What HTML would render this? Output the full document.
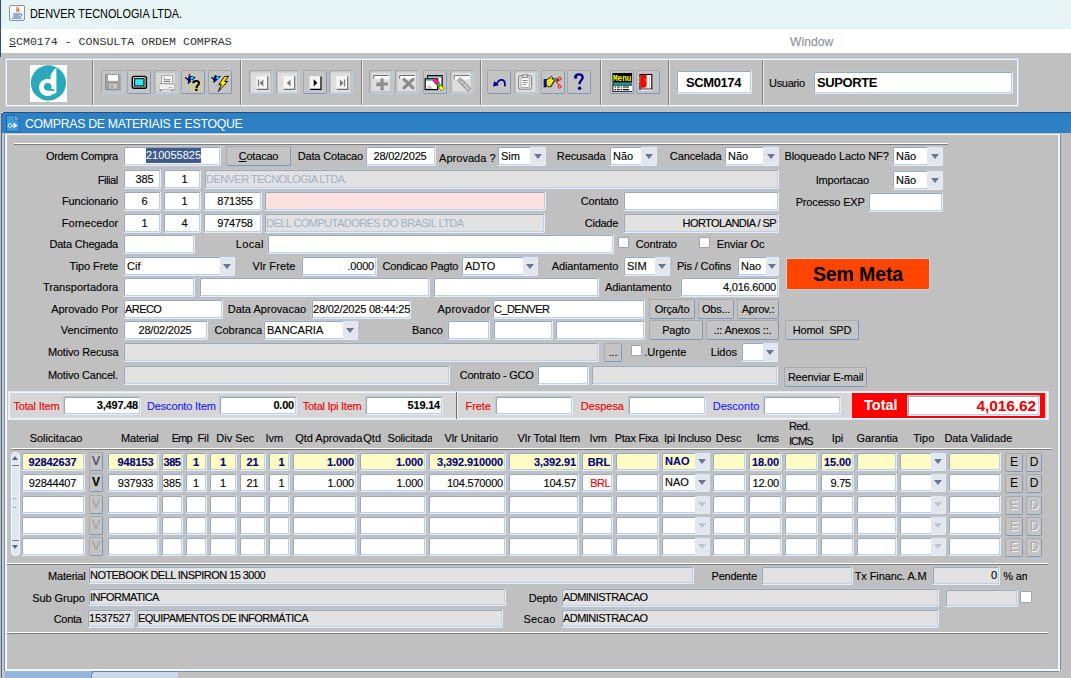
<!DOCTYPE html><html><head><meta charset="utf-8"><style>
*{box-sizing:border-box;margin:0;padding:0}
html,body{width:1071px;height:678px;overflow:hidden;background:#c0c0c0;font-family:"Liberation Sans",sans-serif;font-size:11px;color:#000;-webkit-text-stroke:0.12px currentColor}
body>div,#r div{position:absolute}
div{position:absolute;white-space:nowrap}
.f{background:#fff;border:1px solid;border-color:#b4c8e2 #e4edf8 #e4edf8 #b4c8e2;border-radius:2px;padding:0 2px 0 1px;overflow:hidden;box-shadow:inset 1px 1px 0 #a6a6a6,inset -1px -1px 0 #bcd0ea}
.g{background:#e2e2e2}
.l{line-height:20px;letter-spacing:-0.2px}
.b{background:#c4c4c4;border:1px solid #a9a9a9;border-right-color:#7b98bf;border-bottom-color:#7b98bf;border-radius:2px;text-align:center;letter-spacing:-0.2px}
.ck{background:#fff;border:1px solid #9aa6b4;border-radius:1px}
.ct{position:absolute;left:3px;top:0}
.ca{position:absolute;top:0;background:#e2e6ee}
.ca i{position:absolute;left:50%;margin-left:-4px;width:0;height:0;border-left:4px solid transparent;border-right:4px solid transparent;border-top:5px solid #6b7590}
.yl{background:#fdfcc4}
.nb{color:#000080;font-weight:bold}
.tb{position:absolute;width:24px;height:24px;border:1px solid #aab4c0;border-right-color:#8fa6c4;border-bottom-color:#7e9ac0;border-radius:2px;background:#c4c4c4}
.tb svg{position:absolute;left:3px;top:3px}
.tb{-webkit-text-stroke:0}
.sep{width:2px;background:#808080;border-right:1px solid #f0f0f0}
</style></head><body><div style="left:0;top:0;width:1071px;height:29px;background:#e6f4f5"></div>
<div style="left:0;top:0;width:1px;height:57px;background:#2d4e7e"></div>
<div style="left:0;top:29px;width:1071px;height:24px;background:#fff"></div>
<div style="left:0;top:0;width:1px;height:57px;background:#2d4e7e"></div>
<div style="left:9px;top:5px;width:16px;height:16px;border:1px solid #8294ac;border-radius:2px;background:linear-gradient(#fdfdfe,#e2e8ee)">
<svg width="14" height="14" style="position:absolute;left:0;top:0" viewBox="0 0 14 14"><path d="M7.5 1c-2.2 1.6 1.2 2.6-1 5M9 2.5c-1.2 1 .6 1.8-.6 3" stroke="#e86c12" stroke-width="1.3" fill="none"/><path d="M3 8h7M3.5 10h6M2.5 12h8.5" stroke="#3d6aa8" stroke-width="1.1" fill="none"/><path d="M10 7.5c2.2 0 2.2 2.8 0 3" stroke="#3d6aa8" stroke-width="1" fill="none"/></svg></div>
<div style="left:30px;top:6px;font-size:12.6px;letter-spacing:0px;line-height:17px;color:#000;transform:scaleX(0.865);transform-origin:0 0;-webkit-text-stroke:0">DENVER TECNOLOGIA LTDA.</div>
<div style="left:9px;top:34px;font-family:'Liberation Mono',monospace;font-size:11.6px;line-height:16px;color:#333;-webkit-text-stroke:0"><u style="text-decoration:underline">S</u>CM0174 - CONSULTA ORDEM COMPRAS</div>
<div style="left:790px;top:34px;font-size:12px;line-height:16px;color:#8a9099;letter-spacing:0.1px">Window</div>
<div style="left:5px;top:58px;width:1014px;height:49px;border:1px solid #c4d6ee;box-shadow:inset 0 0 0 1px #f2f6fb"></div>
<div style="left:30px;top:65px;width:37px;height:37px;background:#fff">
<svg width="37" height="37" viewBox="0 0 37 37" style="position:absolute;left:0;top:0"><circle cx="18.4" cy="17.9" r="17.6" fill="#2aa9bd"/>
<circle cx="17.6" cy="22.4" r="8.6" fill="#fff"/>
<polygon points="20.6,10 24.5,4 26.4,2.8 26.4,27.5 24,29 20.6,27" fill="#fff"/>
<circle cx="17.7" cy="21.8" r="3.8" fill="#2aa9bd"/>
<polygon points="17.7,23.5 24.3,24.3 24.3,26.2 17.7,25.6" fill="#2aa9bd"/>
</svg></div>
<div style="left:92px;top:60px;width:1px;height:45px;background:#7f7f7f"></div><div style="left:93px;top:60px;width:1px;height:45px;background:#e8e8e8"></div>
<div style="left:240px;top:60px;width:1px;height:45px;background:#7f7f7f"></div><div style="left:241px;top:60px;width:1px;height:45px;background:#e8e8e8"></div>
<div style="left:361px;top:60px;width:1px;height:45px;background:#7f7f7f"></div><div style="left:362px;top:60px;width:1px;height:45px;background:#e8e8e8"></div>
<div style="left:480px;top:60px;width:1px;height:45px;background:#7f7f7f"></div><div style="left:481px;top:60px;width:1px;height:45px;background:#e8e8e8"></div>
<div style="left:600px;top:60px;width:1px;height:45px;background:#7f7f7f"></div><div style="left:601px;top:60px;width:1px;height:45px;background:#e8e8e8"></div>
<div style="left:668px;top:60px;width:1px;height:45px;background:#7f7f7f"></div><div style="left:669px;top:60px;width:1px;height:45px;background:#e8e8e8"></div>
<div style="left:762px;top:60px;width:1px;height:45px;background:#7f7f7f"></div><div style="left:763px;top:60px;width:1px;height:45px;background:#e8e8e8"></div>
<div class="tb" style="left:101px;top:70px;border-color:#a6a6a6 #b9cfe8 #b9cfe8 #a6a6a6"><svg width="24" height="24" viewBox="0 0 24 24" style="left:-1px;top:-1px"><path d="M4.5 4h13.5l1.7 1.7v14H4.5z" fill="#a0a0a0"/><path d="M4.5 4v15.7h15.2" stroke="#8a8a8a" stroke-width="0.8" fill="none"/><rect x="7" y="4.8" width="10" height="6" fill="#fff"/><rect x="8.2" y="13.9" width="7.8" height="5" fill="#c6c6c6"/><rect x="10.3" y="15.3" width="1.6" height="3.2" fill="#9a9a9a"/><path d="M7 4.3h10M8 19.5h8" stroke="#7a7a7a" stroke-width="0.8" stroke-dasharray="1 1"/></svg></div>
<div class="tb" style="left:127px;top:70px;border-color:#a6a6a6 #7d99c0 #7d99c0 #a6a6a6"><svg width="24" height="24" viewBox="0 0 24 24" style="left:-1px;top:-1px"><rect x="5.3" y="6.4" width="14.1" height="11.9" rx="1.8" fill="#c8c8c8" stroke="#000" stroke-width="1.4"/><rect x="7.2" y="8.2" width="10.3" height="8.3" fill="#000"/><rect x="8.2" y="9.2" width="8.3" height="6.3" fill="#10e4f0"/><path d="M8.5 10.3h8M8.5 12.3h8M8.5 14.3h8" stroke="#bfeef2" stroke-width="0.8" stroke-dasharray="1 1"/></svg></div>
<div class="tb" style="left:154px;top:70px;border-color:#a6a6a6 #b9cfe8 #b9cfe8 #a6a6a6"><svg width="24" height="24" viewBox="0 0 24 24" style="left:-1px;top:-1px"><rect x="2.5" y="3" width="18.5" height="19" fill="#dadada"/><rect x="7.5" y="5.8" width="11" height="7.5" fill="#fff" stroke="#8a8a8a" stroke-width="0.7"/><path d="M9.5 7.8h1.5M9.5 9.8h7M9.5 11.6h7" stroke="#555" stroke-width="0.8"/><path d="M7 12.5v1.5" stroke="#777" stroke-width="0.8"/><rect x="5" y="14" width="15.7" height="5.6" fill="#f0f0f0" stroke="#a8a8a8" stroke-width="0.7"/><path d="M5.5 20.5h2M17.5 20.5h2" stroke="#6a6a6a" stroke-width="1.1"/><path d="M15 17.5h3.5" stroke="#8a8a8a" stroke-width="0.9" stroke-dasharray="1 0.6"/></svg></div>
<div class="tb" style="left:181px;top:70px;border-color:#a6a6a6 #7d99c0 #7d99c0 #a6a6a6"><svg width="24" height="24" viewBox="0 0 24 24" style="left:-1px;top:-1px"><path d="M4.2 7.2l3 2.8" stroke="#000" stroke-width="1.2"/><circle cx="8.4" cy="4.4" r="0.9" fill="#f00"/><path d="M8.2 5.4l1.5 1" stroke="#000" stroke-width="0.9"/><polygon points="8,6.2 14.2,7.4 7.2,13.6" fill="#0010f0" stroke="#000" stroke-width="0.9"/><polygon points="9.2,6.8 13.4,7.6 10.6,10" fill="#00f0f8"/><rect x="10" y="10" width="1" height="1" fill="#ffee00"/><rect x="10" y="12" width="1" height="1" fill="#ffee00"/><rect x="10" y="14" width="1" height="1" fill="#ffee00"/><rect x="10" y="16" width="1" height="1" fill="#ffee00"/><rect x="10" y="18" width="1" height="1" fill="#ffee00"/><rect x="10" y="20" width="1" height="1" fill="#ffee00"/><rect x="12" y="10" width="1" height="1" fill="#ffee00"/><rect x="12" y="12" width="1" height="1" fill="#ffee00"/><rect x="12" y="14" width="1" height="1" fill="#ffee00"/><rect x="12" y="16" width="1" height="1" fill="#ffee00"/><rect x="12" y="18" width="1" height="1" fill="#ffee00"/><rect x="12" y="20" width="1" height="1" fill="#ffee00"/><rect x="14" y="10" width="1" height="1" fill="#ffee00"/><rect x="14" y="12" width="1" height="1" fill="#ffee00"/><rect x="14" y="14" width="1" height="1" fill="#ffee00"/><rect x="14" y="16" width="1" height="1" fill="#ffee00"/><rect x="14" y="18" width="1" height="1" fill="#ffee00"/><rect x="14" y="20" width="1" height="1" fill="#ffee00"/><rect x="16" y="10" width="1" height="1" fill="#ffee00"/><rect x="16" y="12" width="1" height="1" fill="#ffee00"/><rect x="16" y="14" width="1" height="1" fill="#ffee00"/><rect x="16" y="16" width="1" height="1" fill="#ffee00"/><rect x="16" y="18" width="1" height="1" fill="#ffee00"/><rect x="16" y="20" width="1" height="1" fill="#ffee00"/><rect x="18" y="10" width="1" height="1" fill="#ffee00"/><rect x="18" y="12" width="1" height="1" fill="#ffee00"/><rect x="18" y="14" width="1" height="1" fill="#ffee00"/><rect x="18" y="16" width="1" height="1" fill="#ffee00"/><rect x="18" y="18" width="1" height="1" fill="#ffee00"/><rect x="18" y="20" width="1" height="1" fill="#ffee00"/><rect x="20" y="10" width="1" height="1" fill="#ffee00"/><rect x="20" y="12" width="1" height="1" fill="#ffee00"/><rect x="20" y="14" width="1" height="1" fill="#ffee00"/><rect x="20" y="16" width="1" height="1" fill="#ffee00"/><rect x="20" y="18" width="1" height="1" fill="#ffee00"/><rect x="20" y="20" width="1" height="1" fill="#ffee00"/><path d="M12.3 13.3c0-1.6 1.2-2.3 2.8-2.3 1.8 0 2.9 1 2.9 2.3 0 1.9-2.4 2.1-2.4 4.1v0.6" stroke="#000" stroke-width="2" fill="none"/><rect x="14" y="18.8" width="2.6" height="2" fill="#000"/></svg></div>
<div class="tb" style="left:207.5px;top:70px;border-color:#a6a6a6 #7d99c0 #7d99c0 #a6a6a6"><svg width="24" height="24" viewBox="0 0 24 24" style="left:-1px;top:-1px"><path d="M3.5 7.2l2.8 2.6" stroke="#000" stroke-width="1.2"/><path d="M7.2 5.4l1.5 1" stroke="#000" stroke-width="0.9"/><polygon points="6.6,6.1 12.4,6.6 5.8,12.5" fill="#0010f0" stroke="#000" stroke-width="0.9"/><polygon points="7.8,6.6 12,6.8 9.2,9.4" fill="#00f0f8"/><polygon points="16.5,6.5 20.5,6.2 16.6,11.6 19.6,11.3 10.3,21.6 13.4,14.3 10.8,14.5" fill="#ffee00" stroke="#000" stroke-width="0.9" stroke-linejoin="round"/><path d="M10.8 14.5l-1.5 1.8" stroke="#888" stroke-width="0.8"/></svg></div>
<div class="tb" style="left:249px;top:70px;border-color:#a6a6a6 #b9cfe8 #b9cfe8 #a6a6a6"><svg width="24" height="24" viewBox="0 0 24 24" style="left:-1px;top:-1px"><rect x="2" y="2.5" width="19" height="20" fill="#dedede"/><rect x="7.3" y="6.2" width="11" height="12.8" fill="#f6f6f6"/><path d="M18.7 6.6v12.8H7.8" stroke="#707070" stroke-width="1.2" fill="none"/><rect x="8.9" y="9.5" width="1.2" height="7" fill="#7a7a7a"/><polygon points="14.3,9.5 10.5,13 14.3,16.5" fill="#7a7a7a"/></svg></div>
<div class="tb" style="left:275.5px;top:70px;border-color:#a6a6a6 #b9cfe8 #b9cfe8 #a6a6a6"><svg width="24" height="24" viewBox="0 0 24 24" style="left:-1px;top:-1px"><rect x="2" y="2.5" width="19" height="20" fill="#dedede"/><rect x="7.3" y="6.2" width="11" height="12.8" fill="#f6f6f6"/><path d="M18.7 6.6v12.8H7.8" stroke="#707070" stroke-width="1.2" fill="none"/><polygon points="14.5,9.5 10.9,13 14.5,16.5" fill="#7a7a7a"/></svg></div>
<div class="tb" style="left:302.5px;top:70px;border-color:#a6a6a6 #7d99c0 #7d99c0 #a6a6a6"><svg width="24" height="24" viewBox="0 0 24 24" style="left:-1px;top:-1px"><rect x="6.6" y="6.2" width="11" height="12.8" fill="#f6f6f6"/><path d="M18.0 6.6v12.8H7.1" stroke="#000" stroke-width="1.2" fill="none"/><polygon points="10.7,9.2 14.3,12.8 10.7,16.4" fill="#000"/></svg></div>
<div class="tb" style="left:329px;top:70px;border-color:#a6a6a6 #b9cfe8 #b9cfe8 #a6a6a6"><svg width="24" height="24" viewBox="0 0 24 24" style="left:-1px;top:-1px"><rect x="2" y="2.5" width="19" height="20" fill="#dedede"/><rect x="7.3" y="6.2" width="11" height="12.8" fill="#f6f6f6"/><path d="M18.7 6.6v12.8H7.8" stroke="#707070" stroke-width="1.2" fill="none"/><polygon points="10.9,9.5 14.5,13 10.9,16.5" fill="#7a7a7a"/><rect x="14.899999999999999" y="9.5" width="1.2" height="7" fill="#7a7a7a"/></svg></div>
<div class="tb" style="left:369px;top:70px;border-color:#a6a6a6 #b9cfe8 #b9cfe8 #a6a6a6"><svg width="24" height="24" viewBox="0 0 24 24" style="left:-1px;top:-1px"><rect x="2.5" y="2.5" width="18.5" height="18.5" fill="#dedede"/><rect x="4.3" y="5.1" width="15.4" height="4" fill="#fff"/><path d="M4.7 9V5.5h15" stroke="#6e6e6e" stroke-width="1" fill="none"/><path d="M13.1 8.3v11.4M7.3 14.1h11.6" stroke="#8e8e8e" stroke-width="3"/><path d="M11.6 19.7h3M7.3 15.6h4.3" stroke="#6e6e6e" stroke-width="0.9"/></svg></div>
<div class="tb" style="left:395px;top:70px;border-color:#a6a6a6 #b9cfe8 #b9cfe8 #a6a6a6"><svg width="24" height="24" viewBox="0 0 24 24" style="left:-1px;top:-1px"><rect x="2.5" y="2.5" width="18.5" height="18.5" fill="#dedede"/><rect x="4.3" y="5.1" width="15.4" height="4" fill="#fff"/><path d="M4.7 9V5.5h15" stroke="#6e6e6e" stroke-width="1" fill="none"/><path d="M9 9.3l9 8.6M18 9.3l-9 8.6" stroke="#8a8a8a" stroke-width="3" stroke-linecap="round"/></svg></div>
<div class="tb" style="left:422.5px;top:70px;border-color:#a6a6a6 #7d99c0 #7d99c0 #a6a6a6"><svg width="24" height="24" viewBox="0 0 24 24" style="left:-1px;top:-1px"><rect x="4.7" y="5.6" width="14.4" height="11" fill="#fff" stroke="#000" stroke-width="1.2"/><path d="M6 6.9h12" stroke="#108c8c" stroke-width="1.1"/><rect x="2.2" y="8.8" width="12.4" height="10.8" fill="#fff" stroke="#000" stroke-width="1.2"/><path d="M3.3 10h10" stroke="#108c8c" stroke-width="1.1"/><path d="M3 19l3.5-4.5 3.5 4.5z" fill="#c8c8c8"/><polygon points="9.8,10.4 12.4,8.2 16.4,12.8 13.6,15" fill="#ff10d0" stroke="#f00" stroke-width="0.8"/><polygon points="13.6,15 16.4,12.8 18.2,15 15.6,17.2" fill="#00e000"/><polygon points="15.6,17.2 18.2,15 21,18.6 18.6,21" fill="#ffff00" stroke="#000" stroke-width="0.4"/></svg></div>
<div class="tb" style="left:449.5px;top:70px;border-color:#a6a6a6 #b9cfe8 #b9cfe8 #a6a6a6"><svg width="24" height="24" viewBox="0 0 24 24" style="left:-1px;top:-1px"><rect x="2.5" y="2.5" width="18.5" height="19" fill="#dedede"/><rect x="3.8" y="5.2" width="15.4" height="4.2" fill="#fff"/><path d="M4.2 9.4V5.6h15" stroke="#6e6e6e" stroke-width="1" fill="none"/><polygon points="7.5,10.5 10.3,7.7 20.8,18.7 18,21.3" fill="#c4c4c4" stroke="#7a7a7a" stroke-width="0.9"/><path d="M9.5 12.5l2.8-2.8M12 15l2.8-2.8" stroke="#8a8a8a" stroke-width="0.8"/></svg></div>
<div class="tb" style="left:487px;top:70px;border-color:#a6a6a6 #7d99c0 #7d99c0 #a6a6a6"><svg width="24" height="24" viewBox="0 0 24 24" style="left:-1px;top:-1px"><path d="M9.5 14.5c1.3-3.3 3.4-5 5.6-4.6 2.2.5 3.3 2.6 2.6 6.4" stroke="#000090" stroke-width="1.7" fill="none"/><polygon points="6,16.6 7.2,11 11.8,15.2" fill="#000090"/></svg></div>
<div class="tb" style="left:514px;top:70px;border-color:#a6a6a6 #b9cfe8 #b9cfe8 #a6a6a6"><svg width="24" height="24" viewBox="0 0 24 24" style="left:-1px;top:-1px"><rect x="2" y="2.5" width="19.5" height="19.5" fill="#dedede"/><rect x="4.6" y="5.6" width="13" height="13.6" rx="1.3" fill="#e8e8e8" stroke="#7e7e7e" stroke-width="1"/><rect x="7" y="7.8" width="8.2" height="9.8" fill="#fff" stroke="#8a8a8a" stroke-width="0.7"/><path d="M8.5 4.8h5v2.5h-5z" fill="#e8e8e8" stroke="#7e7e7e" stroke-width="0.9"/><path d="M8.6 10.5h5M8.6 12.6h5M8.6 14.7h3.5" stroke="#7e7e7e" stroke-width="0.9"/></svg></div>
<div class="tb" style="left:541px;top:70px;border-color:#a6a6a6 #7d99c0 #7d99c0 #a6a6a6"><svg width="24" height="24" viewBox="0 0 24 24" style="left:-1px;top:-1px"><rect x="3" y="9.3" width="2.2" height="7.7" fill="#0010f0" stroke="#000" stroke-width="0.6"/><path d="M5.2 9.8l2.6-1.2 2.8-2.2 1 1.2-0.8 1.4h6.2v1.9h-4.2v1.5h-0.9v1.5h-0.9v1.5h-0.9v1.3h-2.5l-2.4-1.2z" fill="#f2ea30" stroke="#000" stroke-width="0.9"/><path d="M7 11.5h3.5M7 13.3h3M7 15h2.5" stroke="#c8b000" stroke-width="0.7" stroke-dasharray="0.8 0.8"/><circle cx="18.6" cy="8.6" r="1.5" fill="none" stroke="#f00" stroke-width="1"/><circle cx="18.6" cy="16.6" r="1.5" fill="none" stroke="#f00" stroke-width="1"/><path d="M18 10l-2 2.6 2 2.6" stroke="#f00" stroke-width="1" fill="none"/></svg></div>
<div class="tb" style="left:567px;top:70px;border-color:#a6a6a6 #7d99c0 #7d99c0 #a6a6a6"><svg width="24" height="24" viewBox="0 0 24 24" style="left:-1px;top:-1px"><path d="M8.3 7.6c0-2.1 1.6-3.2 3.6-3.2 2.3 0 3.8 1.3 3.8 3.1 0 2.6-3.1 2.9-3.1 5.8v1" stroke="#000090" stroke-width="2.3" fill="none"/><circle cx="8.6" cy="7.2" r="1.6" fill="#000090"/><circle cx="12.6" cy="18.3" r="1.7" fill="#000090"/></svg></div>
<div class="tb" style="left:609.5px;top:70px;border-color:#a6a6a6 #7d99c0 #7d99c0 #a6a6a6"><svg width="24" height="24" viewBox="0 0 24 24" style="left:-1px;top:-1px"><rect x="2.5" y="3" width="19.5" height="9" fill="#000"/><text x="3" y="10.8" font-family="Liberation Mono" font-weight="bold" font-size="9" fill="#ffff00" textLength="18.5" lengthAdjust="spacingAndGlyphs">Menu</text><rect x="2.5" y="12.4" width="19.5" height="9.6" fill="#000"/><rect x="3.4" y="13.3" width="18.6" height="1.3" fill="#00e8f0"/><rect x="3.4" y="15.6" width="18.6" height="5.6" fill="#fff"/><path d="M4.6 17h1.4M7 17h2.6M10.7 17h1.4M13 17h6M4.6 19.6h1.4M7 19.6h2.6M10.7 19.6h1.4M13 19.6h6" stroke="#000" stroke-width="1.2"/></svg></div>
<div class="tb" style="left:635.5px;top:70px;border-color:#a6a6a6 #7d99c0 #7d99c0 #a6a6a6"><svg width="24" height="24" viewBox="0 0 24 24" style="left:-1px;top:-1px"><rect x="4" y="4.5" width="11.8" height="14.6" fill="#fff" stroke="#000" stroke-width="1.1"/><polygon points="4.5,5 10.6,5 10.6,16.2 9.3,17.4 4.5,17.9" fill="#ff0000"/><path d="M13.4 5.5v11.7h-3.4" stroke="#c8c8c8" stroke-width="1" fill="none"/><circle cx="9.2" cy="9.8" r="0.6" fill="#ff0"/><path d="M2.5 8.4h1.4M2.5 11.5h1.4" stroke="#ff0" stroke-width="0.8"/><path d="M4.5 20h11.5" stroke="#fff" stroke-width="1"/></svg></div>
<div class="f" style="left:676px;top:70px;width:76px;height:24px;font-weight:bold;font-size:13px;line-height:24px;text-align:center;letter-spacing:-0.4px;-webkit-text-stroke:0">SCM0174</div>
<div style="left:769px;top:75px;font-size:11px;line-height:16px;letter-spacing:-0.3px">Usuario</div>
<div class="f" style="left:813px;top:71px;width:200px;height:23px;font-weight:bold;font-size:13px;line-height:22px;letter-spacing:-0.4px;padding-left:3px;-webkit-text-stroke:0">SUPORTE</div>
<div style="left:2px;top:112px;width:1069px;height:21px;background:#2c80c3;border-top:1px solid #24508a"></div>
<div style="left:25px;top:114px;font-size:12.3px;letter-spacing:-0.3px;line-height:18px;color:#fff;top:115px;-webkit-text-stroke:0">COMPRAS DE MATERIAIS E ESTOQUE</div>
<svg width="14" height="17" viewBox="0 0 14 17" style="position:absolute;left:6px;top:115px"><path d="M0.5 0.5h8l4.5 4.5v11.5h-12.5z" fill="#3f98d8" stroke="#2468a8" stroke-width="1"/><path d="M8.5 0.5v4.5h4.5" fill="#7cc0ec" stroke="#2468a8" stroke-width="0.8"/><circle cx="4" cy="10.5" r="1.9" fill="none" stroke="#fff" stroke-width="1.4" stroke-dasharray="1.2 0.8"/><path d="M7.5 7.5l4 3-4 3z" fill="#fff"/></svg>
<div style="left:1px;top:113px;width:1px;height:565px;background:#4a6896"></div>
<div style="left:2px;top:133px;width:2px;height:545px;background:#ccc8c4"></div>
<div style="left:1px;top:112px;width:2px;height:1px;background:#f4f4f4"></div>
<div style="left:4px;top:134px;width:1px;height:537px;background:#6e90b4"></div>
<div style="left:5px;top:134px;width:1055px;height:537px;border-top:1px solid #f6f9fc;border-left:2px solid #f6f9fc;border-right:1px solid #fafcff;border-bottom:2px solid #f6f9fc"></div>
<div style="left:1060px;top:134px;width:1px;height:536px;background:#6d8cb2"></div>
<div style="left:1058px;top:135px;width:2px;height:535px;background:#f2f6fb"></div>
<div style="left:5px;top:671px;width:1054px;height:1px;background:#6d8cb2"></div>
<div style="left:5px;top:671px;width:86px;height:7px;background:#93b6da"></div>
<div style="left:91px;top:671px;width:87px;height:7px;background:#cbd9ea;border-left:1px solid #6a84a8;border-top:1px solid #6a84a8;border-top-left-radius:4px"></div>
<div style="left:14px;top:143px;width:934px;height:1px;background:#fff"></div><div style="left:14px;top:144px;width:934px;height:1px;background:#7c7c7c"></div>
<div style="left:11px;top:448px;width:1041px;height:1px;background:#fff"></div><div style="left:11px;top:449px;width:1041px;height:1px;background:#7c7c7c"></div>
<div style="left:7px;top:563px;width:1041px;height:1px;background:#fff"></div><div style="left:7px;top:564px;width:1041px;height:1px;background:#7c7c7c"></div>
<div style="left:7px;top:632px;width:1041px;height:1px;background:#fff"></div><div style="left:7px;top:633px;width:1041px;height:1px;background:#7c7c7c"></div>
<div class="l" style="left:45.9px;top:146px;letter-spacing:-0.32px;">Ordem Compra</div>
<div class="f" style="left:123px;top:146px;width:98px;height:20px;line-height:18px;padding:0"><span style="position:absolute;left:22px;top:1px;height:15px;line-height:15px;background:#3d5b8c;color:#fff;padding:0 0 0 0;letter-spacing:0px;-webkit-text-stroke:0">210055825</span></div>
<div class="b" style="left:226px;top:146px;width:65px;height:20px;line-height:18px;"><u>C</u>otacao</div>
<div class="l" style="left:297.8px;top:146px;letter-spacing:-0.18px;">Data Cotacao</div>
<div class="f" style="left:365px;top:146px;width:71px;height:20px;text-align:center;line-height:18px;letter-spacing:-0.2px;">28/02/2025</div>
<div class="l" style="left:439.1px;top:148px;letter-spacing:0.02px;">Aprovada ?</div>
<div class="f" style="left:497px;top:146px;width:49px;height:20px;line-height:18px;"><span class="ct">Sim</span><div class="ca" style="left:32px;width:15px;height:18px"><i style="top:7px;border-top-color:#6b7590"></i></div></div>
<div class="l" style="left:556.8px;top:146px;letter-spacing:-0.09px;">Recusada</div>
<div class="f" style="left:609px;top:146px;width:48px;height:20px;line-height:18px;"><span class="ct">Não</span><div class="ca" style="left:31px;width:15px;height:18px"><i style="top:7px;border-top-color:#6b7590"></i></div></div>
<div class="l" style="left:669.8px;top:146px;letter-spacing:-0.11px;">Cancelada</div>
<div class="f" style="left:724px;top:146px;width:55px;height:20px;line-height:18px;"><span class="ct">Não</span><div class="ca" style="left:38px;width:15px;height:18px"><i style="top:7px;border-top-color:#6b7590"></i></div></div>
<div class="l" style="left:784.5px;top:146px;letter-spacing:-0.12px;">Bloqueado Lacto NF?</div>
<div class="f" style="left:892px;top:146px;width:51px;height:20px;line-height:18px;"><span class="ct">Não</span><div class="ca" style="left:34px;width:15px;height:18px"><i style="top:7px;border-top-color:#6b7590"></i></div></div>
<div class="l" style="left:97.8px;top:170px;letter-spacing:-0.44px;">Filial</div>
<div class="f" style="left:123px;top:169px;width:38px;height:20px;text-align:center;line-height:18px;padding-left:5px;padding-right:0;letter-spacing:-0.2px;">385</div>
<div class="f" style="left:163px;top:169px;width:38px;height:20px;text-align:center;line-height:18px;padding-left:5px;padding-right:0;letter-spacing:-0.2px;">1</div>
<div class="f g" style="left:204px;top:169px;width:575px;height:20px;text-align:left;line-height:18px;letter-spacing:-0.55px;"><span style="color:#9fb3cc;-webkit-text-stroke:0">DENVER TECNOLOGIA LTDA.</span></div>
<div class="l" style="left:815.7px;top:170px;letter-spacing:-0.19px;">Importacao</div>
<div class="f" style="left:892px;top:170px;width:51px;height:20px;line-height:18px;"><span class="ct">Não</span><div class="ca" style="left:34px;width:15px;height:18px"><i style="top:7px;border-top-color:#6b7590"></i></div></div>
<div class="l" style="left:62.0px;top:191px;letter-spacing:-0.13px;">Funcionario</div>
<div class="f" style="left:123px;top:191px;width:38px;height:20px;text-align:center;line-height:18px;padding-left:5px;padding-right:0;letter-spacing:-0.2px;">6</div>
<div class="f" style="left:163px;top:191px;width:38px;height:20px;text-align:center;line-height:18px;padding-left:5px;padding-right:0;letter-spacing:-0.2px;">1</div>
<div class="f" style="left:203px;top:191px;width:59px;height:20px;text-align:center;line-height:18px;padding-left:5px;padding-right:0;letter-spacing:-0.2px;">871355</div>
<div class="f g" style="left:264px;top:191px;width:282px;height:20px;text-align:left;line-height:18px;letter-spacing:-0.2px;background:#fde0e0"></div>
<div class="l" style="left:580.7px;top:191px;letter-spacing:-0.15px;">Contato</div>
<div class="f" style="left:623px;top:191px;width:156px;height:20px;text-align:left;line-height:18px;letter-spacing:-0.2px;"></div>
<div class="l" style="left:795.7px;top:192px;letter-spacing:-0.16px;">Processo EXP</div>
<div class="f" style="left:868px;top:192px;width:75px;height:20px;text-align:left;line-height:18px;letter-spacing:-0.2px;"></div>
<div class="l" style="left:61.8px;top:213px;letter-spacing:0.02px;">Fornecedor</div>
<div class="f" style="left:123px;top:213px;width:38px;height:20px;text-align:center;line-height:18px;padding-left:5px;padding-right:0;letter-spacing:-0.2px;">1</div>
<div class="f" style="left:163px;top:213px;width:38px;height:20px;text-align:center;line-height:18px;padding-left:5px;padding-right:0;letter-spacing:-0.2px;">4</div>
<div class="f" style="left:203px;top:213px;width:59px;height:20px;text-align:center;line-height:18px;padding-left:5px;padding-right:0;letter-spacing:-0.2px;">974758</div>
<div class="f g" style="left:264px;top:213px;width:281px;height:20px;text-align:left;line-height:18px;letter-spacing:-0.55px;"><span style="color:#9fb3cc;-webkit-text-stroke:0">DELL COMPUTADORES DO BRASIL LTDA</span></div>
<div class="l" style="left:584.8px;top:213px;letter-spacing:-0.27px;">Cidade</div>
<div class="f g" style="left:623px;top:213px;width:156px;height:20px;text-align:right;line-height:18px;letter-spacing:-0.55px;">HORTOLANDIA / SP</div>
<div class="l" style="left:49.4px;top:234px;letter-spacing:-0.19px;">Data Chegada</div>
<div class="f" style="left:123px;top:234px;width:72px;height:20px;text-align:left;line-height:18px;letter-spacing:-0.2px;"></div>
<div class="l" style="left:235.7px;top:234px;letter-spacing:0.38px;">Local</div>
<div class="f" style="left:267px;top:234px;width:347px;height:20px;text-align:left;line-height:18px;letter-spacing:-0.2px;"></div>
<div class="ck" style="left:618px;top:237px;width:11px;height:11px;"></div>
<div class="l" style="left:635.7px;top:234px;letter-spacing:-0.13px;">Contrato</div>
<div class="ck" style="left:699px;top:237px;width:11px;height:11px;"></div>
<div class="l" style="left:716.7px;top:234px;letter-spacing:-0.06px;">Enviar Oc</div>
<div class="l" style="left:69.6px;top:256px;letter-spacing:-0.12px;">Tipo Frete</div>
<div class="f" style="left:123px;top:256px;width:112px;height:20px;line-height:18px;"><span class="ct">Cif</span><div class="ca" style="left:96px;width:14px;height:18px"><i style="top:7px;border-top-color:#6b7590"></i></div></div>
<div class="l" style="left:252.5px;top:256px;letter-spacing:0.09px;">Vlr Frete</div>
<div class="f" style="left:301px;top:256px;width:76px;height:20px;text-align:right;line-height:18px;letter-spacing:-0.2px;">.0000</div>
<div class="l" style="left:382.5px;top:256px;letter-spacing:-0.18px;">Condicao Pagto</div>
<div class="f" style="left:461px;top:256px;width:77px;height:20px;line-height:18px;"><span class="ct">ADTO</span><div class="ca" style="left:61px;width:14px;height:18px"><i style="top:7px;border-top-color:#6b7590"></i></div></div>
<div class="l" style="left:551.8px;top:256px;letter-spacing:-0.13px;">Adiantamento</div>
<div class="f" style="left:623px;top:256px;width:47px;height:20px;line-height:18px;"><span class="ct">SIM</span><div class="ca" style="left:31px;width:14px;height:18px"><i style="top:7px;border-top-color:#6b7590"></i></div></div>
<div class="l" style="left:676.9px;top:256px;letter-spacing:-0.12px;">Pis / Cofins</div>
<div class="f" style="left:737px;top:256px;width:42px;height:20px;line-height:18px;"><span class="ct">Nao</span><div class="ca" style="left:28px;width:12px;height:18px"><i style="top:7px;border-top-color:#6b7590"></i></div></div>
<div style="left:786px;top:258px;width:144px;height:32px;background:#ff4500;border:1px solid #d8d0d0;font-weight:bold;font-size:19.5px;line-height:31px;text-align:center;letter-spacing:-0.1px;color:#000;-webkit-text-stroke:0">Sem Meta</div>
<div class="l" style="left:42.9px;top:277px;letter-spacing:0.04px;">Transportadora</div>
<div class="f" style="left:123px;top:277px;width:72px;height:20px;text-align:left;line-height:18px;letter-spacing:-0.2px;"></div>
<div class="f" style="left:199px;top:277px;width:231px;height:20px;text-align:left;line-height:18px;letter-spacing:-0.2px;"></div>
<div class="f" style="left:433px;top:277px;width:166px;height:20px;text-align:left;line-height:18px;letter-spacing:-0.2px;"></div>
<div class="l" style="left:605.1px;top:277px;letter-spacing:-0.13px;">Adiantamento</div>
<div class="f" style="left:680px;top:277px;width:99px;height:20px;text-align:right;line-height:18px;letter-spacing:-0.2px;">4,016.6000</div>
<div class="l" style="left:51.2px;top:299px;letter-spacing:-0.02px;">Aprovado Por</div>
<div class="f" style="left:123px;top:299px;width:100px;height:20px;text-align:left;line-height:18px;letter-spacing:-0.55px;">ARECO</div>
<div class="l" style="left:227.7px;top:299px;letter-spacing:0.02px;">Data Aprovacao</div>
<div class="f" style="left:311px;top:299px;width:100px;height:20px;text-align:left;line-height:18px;letter-spacing:-0.2px;">28/02/2025 08:44:25</div>
<div class="l" style="left:437.5px;top:299px;letter-spacing:0.24px;">Aprovador</div>
<div class="f" style="left:492px;top:299px;width:153px;height:20px;text-align:left;line-height:18px;letter-spacing:-0.55px;">C_DENVER</div>
<div class="b" style="left:649px;top:299px;width:46px;height:20px;line-height:18px;">Orça/to</div>
<div class="b" style="left:698px;top:299px;width:36px;height:20px;line-height:18px;">Obs...</div>
<div class="b" style="left:737px;top:299px;width:42px;height:20px;line-height:18px;">Aprov.:</div>
<div class="l" style="left:60.8px;top:320px;letter-spacing:-0.01px;">Vencimento</div>
<div class="f" style="left:123px;top:320px;width:85px;height:20px;text-align:center;line-height:18px;letter-spacing:-0.2px;">28/02/2025</div>
<div class="l" style="left:214.5px;top:320px;letter-spacing:0.00px;">Cobranca</div>
<div class="f" style="left:263px;top:320px;width:95px;height:20px;line-height:18px;"><span class="ct">BANCARIA</span><div class="ca" style="left:79px;width:14px;height:18px"><i style="top:7px;border-top-color:#6b7590"></i></div></div>
<div class="l" style="left:412.0px;top:320px;letter-spacing:-0.05px;">Banco</div>
<div class="f" style="left:447px;top:320px;width:43px;height:20px;text-align:left;line-height:18px;letter-spacing:-0.2px;"></div>
<div class="f" style="left:493px;top:320px;width:60px;height:20px;text-align:left;line-height:18px;letter-spacing:-0.2px;"></div>
<div class="f" style="left:555px;top:320px;width:90px;height:20px;text-align:left;line-height:18px;letter-spacing:-0.2px;"></div>
<div class="b" style="left:649px;top:320px;width:54px;height:20px;line-height:18px;">Pagto</div>
<div class="b" style="left:706px;top:320px;width:73px;height:20px;line-height:18px;">.:: Anexos ::.</div>
<div class="b" style="left:785px;top:320px;width:74px;height:20px;line-height:18px;">Homol &nbsp;SPD</div>
<div class="l" style="left:47.9px;top:342px;letter-spacing:-0.16px;">Motivo Recusa</div>
<div class="f g" style="left:123px;top:342px;width:476px;height:20px;text-align:left;line-height:18px;letter-spacing:-0.2px;"></div>
<div class="b" style="left:604px;top:343px;width:18px;height:19px;line-height:17px;">...</div>
<div class="ck" style="left:631px;top:345px;width:11px;height:11px;"></div>
<div class="l" style="left:644.3px;top:342px;letter-spacing:-0.01px;">.Urgente</div>
<div class="l" style="left:710.8px;top:342px;letter-spacing:-0.02px;">Lidos</div>
<div class="f" style="left:741px;top:342px;width:37px;height:20px;line-height:18px;"><span class="ct"></span><div class="ca" style="left:21px;width:14px;height:18px"><i style="top:7px;border-top-color:#6b7590"></i></div></div>
<div class="l" style="left:47.9px;top:365px;letter-spacing:-0.19px;">Motivo Cancel.</div>
<div class="f g" style="left:123px;top:365px;width:327px;height:20px;text-align:left;line-height:18px;letter-spacing:-0.2px;"></div>
<div class="l" style="left:459.7px;top:365px;letter-spacing:-0.22px;">Contrato - GCO</div>
<div class="f" style="left:537px;top:365px;width:52px;height:20px;text-align:left;line-height:18px;letter-spacing:-0.2px;"></div>
<div class="f g" style="left:591px;top:365px;width:187px;height:20px;text-align:left;line-height:18px;letter-spacing:-0.2px;"></div>
<div class="b" style="left:784px;top:367px;width:83px;height:20px;line-height:18px;">Reenviar E-mail</div>
<div style="left:8px;top:391px;width:1041px;height:29px;background:#d6d6d6;border:1px solid #dfe8f3;box-shadow:inset 0 0 0 1px #f3f6fa"></div>
<div style="left:456px;top:392px;width:1px;height:27px;background:#6f6f6f"></div>
<div style="left:457px;top:392px;width:1px;height:27px;background:#f0f0f0"></div>
<div class="l" style="left:13.4px;top:396px;letter-spacing:-0.15px;color:#f00000">Total Item</div>
<div class="f" style="left:63px;top:396px;width:78px;height:19px;text-align:right;line-height:17px;letter-spacing:-0.2px;"><b>3,497.48</b></div>
<div class="l" style="left:147.0px;top:396px;letter-spacing:-0.16px;color:#1a1aff">Desconto Item</div>
<div class="f" style="left:219px;top:396px;width:78px;height:19px;text-align:right;line-height:17px;letter-spacing:-0.2px;"><b>0.00</b></div>
<div class="l" style="left:302.8px;top:396px;letter-spacing:-0.27px;color:#f00000">Total Ipi Item</div>
<div class="f" style="left:365px;top:396px;width:78px;height:19px;text-align:right;line-height:17px;letter-spacing:-0.2px;"><b>519.14</b></div>
<div class="l" style="left:465.5px;top:396px;letter-spacing:-0.07px;color:#f00000">Frete</div>
<div class="f" style="left:495px;top:396px;width:78px;height:19px;text-align:left;line-height:17px;letter-spacing:-0.2px;"></div>
<div class="l" style="left:580.7px;top:396px;letter-spacing:-0.02px;color:#f00000">Despesa</div>
<div class="f" style="left:628px;top:396px;width:78px;height:19px;text-align:left;line-height:17px;letter-spacing:-0.2px;"></div>
<div class="l" style="left:712.7px;top:396px;letter-spacing:0.03px;color:#1a1aff">Desconto</div>
<div class="f" style="left:763px;top:396px;width:78px;height:19px;text-align:left;line-height:17px;letter-spacing:-0.2px;"></div>
<div style="left:852px;top:393px;width:193px;height:25px;background:#fe0000"></div>
<div style="left:864px;top:393px;font-weight:bold;font-size:14.5px;line-height:25px;color:#fff;letter-spacing:0;-webkit-text-stroke:0">Total</div>
<div class="f" style="left:907px;top:395px;width:133px;height:21px;text-align:right;line-height:19px;letter-spacing:-0.2px;line-height:20px;padding-right:3px"><b style="font-size:15.5px;color:#f00000;letter-spacing:-0.1px;-webkit-text-stroke:0">4,016.62</b></div>
<div class="l" style="left:29.7px;top:428px;letter-spacing:-0.04px;">Solicitacao</div>
<div class="l" style="left:121.0px;top:428px;letter-spacing:-0.19px;">Material</div>
<div class="l" style="left:171.7px;top:428px;letter-spacing:-0.90px;">Emp</div>
<div class="l" style="left:197.4px;top:428px;letter-spacing:-0.00px;">Fil</div>
<div class="l" style="left:216.3px;top:428px;letter-spacing:0.02px;">Div Sec</div>
<div class="l" style="left:265.5px;top:428px;letter-spacing:-0.06px;">Ivm</div>
<div class="l" style="left:295.2px;top:428px;letter-spacing:-0.01px;">Qtd Aprovada</div>
<div class="l" style="left:363.3px;top:428px;letter-spacing:-0.01px;">Qtd</div>
<div class="l" style="left:387.5px;top:428px;letter-spacing:-0.20px;width:44px;overflow:hidden">Solicitada</div>
<div class="l" style="left:444.5px;top:428px;letter-spacing:-0.08px;">Vlr Unitario</div>
<div class="l" style="left:517.6px;top:428px;letter-spacing:-0.10px;">Vlr Total Item</div>
<div class="l" style="left:589.5px;top:428px;letter-spacing:-0.16px;">Ivm</div>
<div class="l" style="left:614.7px;top:428px;letter-spacing:-0.26px;">Ptax Fixa</div>
<div class="l" style="left:663.9px;top:428px;letter-spacing:-0.20px;width:48px;overflow:hidden">Ipi Incluso</div>
<div class="l" style="left:715.8px;top:428px;letter-spacing:0.18px;">Desc</div>
<div class="l" style="left:756.7px;top:428px;letter-spacing:-0.27px;">Icms</div>
<div class="l" style="left:831.8px;top:428px;letter-spacing:-0.11px;">Ipi</div>
<div class="l" style="left:856.5px;top:428px;letter-spacing:-0.11px;">Garantia</div>
<div class="l" style="left:913.2px;top:428px;letter-spacing:0.04px;">Tipo</div>
<div class="l" style="left:944.4px;top:428px;letter-spacing:-0.04px;">Data Validade</div>
<div class="l" style="left:788.9px;top:416px;letter-spacing:-0.55px;">Red.</div>
<div class="l" style="left:788.9px;top:431px;letter-spacing:-0.90px;">ICMS</div>
<div class="f yl nb" style="left:21px;top:452px;width:64px;height:19px;text-align:center;line-height:17px;letter-spacing:-0.2px;line-height:18px;letter-spacing:-0.1px;">92842637</div>
<div class="f yl nb" style="left:107px;top:452px;width:52px;height:19px;text-align:center;line-height:17px;padding-left:5px;padding-right:0;letter-spacing:-0.2px;line-height:18px;letter-spacing:-0.1px;">948153</div>
<div class="f yl nb" style="left:161px;top:452px;width:22px;height:19px;text-align:center;line-height:17px;letter-spacing:-0.2px;padding-left:0;padding-right:0;line-height:18px;letter-spacing:-0.5px;">385</div>
<div class="f yl nb" style="left:185px;top:452px;width:22px;height:19px;text-align:center;line-height:17px;letter-spacing:-0.2px;padding-left:0;padding-right:0;line-height:18px;letter-spacing:-0.1px;">1</div>
<div class="f yl nb" style="left:209px;top:452px;width:28px;height:19px;text-align:center;line-height:17px;letter-spacing:-0.2px;padding-left:0;padding-right:0;line-height:18px;letter-spacing:-0.1px;">1</div>
<div class="f yl nb" style="left:239px;top:452px;width:27px;height:19px;text-align:center;line-height:17px;letter-spacing:-0.2px;padding-left:0;padding-right:0;line-height:18px;letter-spacing:-0.1px;">21</div>
<div class="f yl nb" style="left:268px;top:452px;width:22px;height:19px;text-align:center;line-height:17px;padding-left:5px;padding-right:0;letter-spacing:-0.2px;line-height:18px;letter-spacing:-0.1px;">1</div>
<div class="f yl nb" style="left:292px;top:452px;width:65px;height:19px;text-align:right;line-height:17px;letter-spacing:-0.2px;line-height:18px;letter-spacing:-0.1px;">1.000</div>
<div class="f yl nb" style="left:359px;top:452px;width:67px;height:19px;text-align:right;line-height:17px;letter-spacing:-0.2px;line-height:18px;letter-spacing:-0.1px;">1.000</div>
<div class="f yl nb" style="left:428px;top:452px;width:78px;height:19px;text-align:right;line-height:17px;letter-spacing:-0.2px;line-height:18px;letter-spacing:-0.1px;">3,392.910000</div>
<div class="f yl nb" style="left:508px;top:452px;width:71px;height:19px;text-align:right;line-height:17px;letter-spacing:-0.2px;line-height:18px;letter-spacing:-0.1px;">3,392.91</div>
<div class="f yl nb" style="left:581px;top:452px;width:32px;height:19px;text-align:right;line-height:17px;letter-spacing:-0.55px;line-height:18px;letter-spacing:-0.1px;">BRL</div>
<div class="f yl nb" style="left:615px;top:452px;width:44px;height:19px;text-align:left;line-height:17px;letter-spacing:-0.2px;line-height:18px;letter-spacing:-0.1px;"></div>
<div class="f yl nb" style="left:661px;top:452px;width:49px;height:19px;line-height:17px;"><span class="ct">NAO</span><div class="ca" style="left:33px;width:14px;height:17px"><i style="top:6px;border-top-color:#6b7590"></i></div></div>
<div class="f yl nb" style="left:712px;top:452px;width:34px;height:19px;text-align:left;line-height:17px;letter-spacing:-0.2px;line-height:18px;letter-spacing:-0.1px;"></div>
<div class="f yl nb" style="left:748px;top:452px;width:34px;height:19px;text-align:right;line-height:17px;letter-spacing:-0.2px;line-height:18px;letter-spacing:-0.1px;">18.00</div>
<div class="f yl nb" style="left:784px;top:452px;width:34px;height:19px;text-align:right;line-height:17px;letter-spacing:-0.2px;line-height:18px;letter-spacing:-0.1px;"></div>
<div class="f yl nb" style="left:820px;top:452px;width:34px;height:19px;text-align:right;line-height:17px;letter-spacing:-0.2px;line-height:18px;letter-spacing:-0.1px;">15.00</div>
<div class="f yl nb" style="left:856px;top:452px;width:41px;height:19px;text-align:left;line-height:17px;letter-spacing:-0.2px;line-height:18px;letter-spacing:-0.1px;"></div>
<div class="f yl nb" style="left:899px;top:452px;width:47px;height:19px;line-height:17px;"><span class="ct"></span><div class="ca" style="left:31px;width:14px;height:17px"><i style="top:6px;border-top-color:#6b7590"></i></div></div>
<div class="f yl nb" style="left:948px;top:452px;width:53px;height:19px;text-align:left;line-height:17px;letter-spacing:-0.2px;line-height:18px;letter-spacing:-0.1px;"></div>
<div class="b" style="left:89px;top:452px;width:14px;height:19px;line-height:17px;border-color:#a9a9a9;border-right-color:#7b98bf;border-bottom-color:#7b98bf"><span style="color:#3a3a4a;font-weight:normal;font-size:12px">V</span></div>
<div class="b" style="left:1005px;top:453px;width:18px;height:19px;line-height:17px;"><span style="color:#000;font-size:12px;-webkit-text-stroke:0;">E</span></div>
<div class="b" style="left:1026px;top:453px;width:16px;height:19px;line-height:17px;"><span style="color:#000;font-size:12px;-webkit-text-stroke:0;">D</span></div>
<div class="f " style="left:21px;top:473px;width:64px;height:19px;text-align:center;line-height:17px;letter-spacing:-0.2px;line-height:18px;">92844407</div>
<div class="f " style="left:107px;top:473px;width:52px;height:19px;text-align:center;line-height:17px;padding-left:5px;padding-right:0;letter-spacing:-0.2px;line-height:18px;">937933</div>
<div class="f " style="left:161px;top:473px;width:22px;height:19px;text-align:center;line-height:17px;letter-spacing:-0.2px;padding-left:0;padding-right:0;line-height:18px;">385</div>
<div class="f " style="left:185px;top:473px;width:22px;height:19px;text-align:center;line-height:17px;letter-spacing:-0.2px;padding-left:0;padding-right:0;line-height:18px;">1</div>
<div class="f " style="left:209px;top:473px;width:28px;height:19px;text-align:center;line-height:17px;letter-spacing:-0.2px;padding-left:0;padding-right:0;line-height:18px;">1</div>
<div class="f " style="left:239px;top:473px;width:27px;height:19px;text-align:center;line-height:17px;letter-spacing:-0.2px;padding-left:0;padding-right:0;line-height:18px;">21</div>
<div class="f " style="left:268px;top:473px;width:22px;height:19px;text-align:center;line-height:17px;padding-left:5px;padding-right:0;letter-spacing:-0.2px;line-height:18px;">1</div>
<div class="f " style="left:292px;top:473px;width:65px;height:19px;text-align:right;line-height:17px;letter-spacing:-0.2px;line-height:18px;">1.000</div>
<div class="f " style="left:359px;top:473px;width:67px;height:19px;text-align:right;line-height:17px;letter-spacing:-0.2px;line-height:18px;">1.000</div>
<div class="f " style="left:428px;top:473px;width:78px;height:19px;text-align:right;line-height:17px;letter-spacing:-0.2px;line-height:18px;">104.570000</div>
<div class="f " style="left:508px;top:473px;width:71px;height:19px;text-align:right;line-height:17px;letter-spacing:-0.2px;line-height:18px;">104.57</div>
<div class="f " style="left:581px;top:473px;width:32px;height:19px;text-align:right;line-height:17px;letter-spacing:-0.55px;line-height:18px;"><span style="color:#f00000">BRL</span></div>
<div class="f " style="left:615px;top:473px;width:44px;height:19px;text-align:left;line-height:17px;letter-spacing:-0.2px;line-height:18px;"></div>
<div class="f " style="left:661px;top:473px;width:49px;height:19px;line-height:17px;"><span class="ct">NAO</span><div class="ca" style="left:33px;width:14px;height:17px"><i style="top:6px;border-top-color:#6b7590"></i></div></div>
<div class="f " style="left:712px;top:473px;width:34px;height:19px;text-align:left;line-height:17px;letter-spacing:-0.2px;line-height:18px;"></div>
<div class="f " style="left:748px;top:473px;width:34px;height:19px;text-align:right;line-height:17px;letter-spacing:-0.2px;line-height:18px;">12.00</div>
<div class="f " style="left:784px;top:473px;width:34px;height:19px;text-align:right;line-height:17px;letter-spacing:-0.2px;line-height:18px;"></div>
<div class="f " style="left:820px;top:473px;width:34px;height:19px;text-align:right;line-height:17px;letter-spacing:-0.2px;line-height:18px;">9.75</div>
<div class="f " style="left:856px;top:473px;width:41px;height:19px;text-align:left;line-height:17px;letter-spacing:-0.2px;line-height:18px;"></div>
<div class="f " style="left:899px;top:473px;width:47px;height:19px;line-height:17px;"><span class="ct"></span><div class="ca" style="left:31px;width:14px;height:17px"><i style="top:6px;border-top-color:#6b7590"></i></div></div>
<div class="f " style="left:948px;top:473px;width:53px;height:19px;text-align:left;line-height:17px;letter-spacing:-0.2px;line-height:18px;"></div>
<div class="b" style="left:89px;top:473px;width:14px;height:19px;line-height:17px;border-color:#a9a9a9;border-right-color:#7b98bf;border-bottom-color:#7b98bf"><span style="color:#000;font-weight:bold;font-size:12px">V</span></div>
<div class="b" style="left:1005px;top:474px;width:18px;height:19px;line-height:17px;"><span style="color:#000;font-size:12px;-webkit-text-stroke:0;">E</span></div>
<div class="b" style="left:1026px;top:474px;width:16px;height:19px;line-height:17px;"><span style="color:#000;font-size:12px;-webkit-text-stroke:0;">D</span></div>
<div class="f " style="left:21px;top:495px;width:64px;height:19px;text-align:center;line-height:17px;letter-spacing:-0.2px;line-height:18px;"></div>
<div class="f " style="left:107px;top:495px;width:52px;height:19px;text-align:center;line-height:17px;padding-left:5px;padding-right:0;letter-spacing:-0.2px;line-height:18px;"></div>
<div class="f " style="left:161px;top:495px;width:22px;height:19px;text-align:center;line-height:17px;letter-spacing:-0.2px;padding-left:0;padding-right:0;line-height:18px;"></div>
<div class="f " style="left:185px;top:495px;width:22px;height:19px;text-align:center;line-height:17px;letter-spacing:-0.2px;padding-left:0;padding-right:0;line-height:18px;"></div>
<div class="f " style="left:209px;top:495px;width:28px;height:19px;text-align:center;line-height:17px;letter-spacing:-0.2px;padding-left:0;padding-right:0;line-height:18px;"></div>
<div class="f " style="left:239px;top:495px;width:27px;height:19px;text-align:center;line-height:17px;letter-spacing:-0.2px;padding-left:0;padding-right:0;line-height:18px;"></div>
<div class="f " style="left:268px;top:495px;width:22px;height:19px;text-align:center;line-height:17px;padding-left:5px;padding-right:0;letter-spacing:-0.2px;line-height:18px;"></div>
<div class="f " style="left:292px;top:495px;width:65px;height:19px;text-align:right;line-height:17px;letter-spacing:-0.2px;line-height:18px;"></div>
<div class="f " style="left:359px;top:495px;width:67px;height:19px;text-align:right;line-height:17px;letter-spacing:-0.2px;line-height:18px;"></div>
<div class="f " style="left:428px;top:495px;width:78px;height:19px;text-align:right;line-height:17px;letter-spacing:-0.2px;line-height:18px;"></div>
<div class="f " style="left:508px;top:495px;width:71px;height:19px;text-align:right;line-height:17px;letter-spacing:-0.2px;line-height:18px;"></div>
<div class="f " style="left:581px;top:495px;width:32px;height:19px;text-align:right;line-height:17px;letter-spacing:-0.2px;line-height:18px;"></div>
<div class="f " style="left:615px;top:495px;width:44px;height:19px;text-align:left;line-height:17px;letter-spacing:-0.2px;line-height:18px;"></div>
<div class="f " style="left:661px;top:495px;width:49px;height:19px;line-height:17px;"><span class="ct"></span><div class="ca" style="left:33px;width:14px;height:17px"><i style="top:6px;border-top-color:#c0c4cc"></i></div></div>
<div class="f " style="left:712px;top:495px;width:34px;height:19px;text-align:left;line-height:17px;letter-spacing:-0.2px;line-height:18px;"></div>
<div class="f " style="left:748px;top:495px;width:34px;height:19px;text-align:right;line-height:17px;letter-spacing:-0.2px;line-height:18px;"></div>
<div class="f " style="left:784px;top:495px;width:34px;height:19px;text-align:right;line-height:17px;letter-spacing:-0.2px;line-height:18px;"></div>
<div class="f " style="left:820px;top:495px;width:34px;height:19px;text-align:right;line-height:17px;letter-spacing:-0.2px;line-height:18px;"></div>
<div class="f " style="left:856px;top:495px;width:41px;height:19px;text-align:left;line-height:17px;letter-spacing:-0.2px;line-height:18px;"></div>
<div class="f " style="left:899px;top:495px;width:47px;height:19px;line-height:17px;"><span class="ct"></span><div class="ca" style="left:31px;width:14px;height:17px"><i style="top:6px;border-top-color:#c0c4cc"></i></div></div>
<div class="f " style="left:948px;top:495px;width:53px;height:19px;text-align:left;line-height:17px;letter-spacing:-0.2px;line-height:18px;"></div>
<div class="b" style="left:89px;top:495px;width:14px;height:19px;line-height:17px;border-color:#a9a9a9;border-right-color:#7b98bf;border-bottom-color:#7b98bf"><span style="color:#a0a0a0;font-weight:normal;font-size:12px">V</span></div>
<div class="b" style="left:1005px;top:496px;width:18px;height:19px;line-height:17px;"><span style="color:#a8a8a8;font-size:12px;-webkit-text-stroke:0;text-shadow:1px 1px 0 #f4f4f4;">E</span></div>
<div class="b" style="left:1026px;top:496px;width:16px;height:19px;line-height:17px;"><span style="color:#a8a8a8;font-size:12px;-webkit-text-stroke:0;text-shadow:1px 1px 0 #f4f4f4;">D</span></div>
<div class="f " style="left:21px;top:516px;width:64px;height:19px;text-align:center;line-height:17px;letter-spacing:-0.2px;line-height:18px;"></div>
<div class="f " style="left:107px;top:516px;width:52px;height:19px;text-align:center;line-height:17px;padding-left:5px;padding-right:0;letter-spacing:-0.2px;line-height:18px;"></div>
<div class="f " style="left:161px;top:516px;width:22px;height:19px;text-align:center;line-height:17px;letter-spacing:-0.2px;padding-left:0;padding-right:0;line-height:18px;"></div>
<div class="f " style="left:185px;top:516px;width:22px;height:19px;text-align:center;line-height:17px;letter-spacing:-0.2px;padding-left:0;padding-right:0;line-height:18px;"></div>
<div class="f " style="left:209px;top:516px;width:28px;height:19px;text-align:center;line-height:17px;letter-spacing:-0.2px;padding-left:0;padding-right:0;line-height:18px;"></div>
<div class="f " style="left:239px;top:516px;width:27px;height:19px;text-align:center;line-height:17px;letter-spacing:-0.2px;padding-left:0;padding-right:0;line-height:18px;"></div>
<div class="f " style="left:268px;top:516px;width:22px;height:19px;text-align:center;line-height:17px;padding-left:5px;padding-right:0;letter-spacing:-0.2px;line-height:18px;"></div>
<div class="f " style="left:292px;top:516px;width:65px;height:19px;text-align:right;line-height:17px;letter-spacing:-0.2px;line-height:18px;"></div>
<div class="f " style="left:359px;top:516px;width:67px;height:19px;text-align:right;line-height:17px;letter-spacing:-0.2px;line-height:18px;"></div>
<div class="f " style="left:428px;top:516px;width:78px;height:19px;text-align:right;line-height:17px;letter-spacing:-0.2px;line-height:18px;"></div>
<div class="f " style="left:508px;top:516px;width:71px;height:19px;text-align:right;line-height:17px;letter-spacing:-0.2px;line-height:18px;"></div>
<div class="f " style="left:581px;top:516px;width:32px;height:19px;text-align:right;line-height:17px;letter-spacing:-0.2px;line-height:18px;"></div>
<div class="f " style="left:615px;top:516px;width:44px;height:19px;text-align:left;line-height:17px;letter-spacing:-0.2px;line-height:18px;"></div>
<div class="f " style="left:661px;top:516px;width:49px;height:19px;line-height:17px;"><span class="ct"></span><div class="ca" style="left:33px;width:14px;height:17px"><i style="top:6px;border-top-color:#c0c4cc"></i></div></div>
<div class="f " style="left:712px;top:516px;width:34px;height:19px;text-align:left;line-height:17px;letter-spacing:-0.2px;line-height:18px;"></div>
<div class="f " style="left:748px;top:516px;width:34px;height:19px;text-align:right;line-height:17px;letter-spacing:-0.2px;line-height:18px;"></div>
<div class="f " style="left:784px;top:516px;width:34px;height:19px;text-align:right;line-height:17px;letter-spacing:-0.2px;line-height:18px;"></div>
<div class="f " style="left:820px;top:516px;width:34px;height:19px;text-align:right;line-height:17px;letter-spacing:-0.2px;line-height:18px;"></div>
<div class="f " style="left:856px;top:516px;width:41px;height:19px;text-align:left;line-height:17px;letter-spacing:-0.2px;line-height:18px;"></div>
<div class="f " style="left:899px;top:516px;width:47px;height:19px;line-height:17px;"><span class="ct"></span><div class="ca" style="left:31px;width:14px;height:17px"><i style="top:6px;border-top-color:#c0c4cc"></i></div></div>
<div class="f " style="left:948px;top:516px;width:53px;height:19px;text-align:left;line-height:17px;letter-spacing:-0.2px;line-height:18px;"></div>
<div class="b" style="left:89px;top:516px;width:14px;height:19px;line-height:17px;border-color:#a9a9a9;border-right-color:#7b98bf;border-bottom-color:#7b98bf"><span style="color:#a0a0a0;font-weight:normal;font-size:12px">V</span></div>
<div class="b" style="left:1005px;top:517px;width:18px;height:19px;line-height:17px;"><span style="color:#a8a8a8;font-size:12px;-webkit-text-stroke:0;text-shadow:1px 1px 0 #f4f4f4;">E</span></div>
<div class="b" style="left:1026px;top:517px;width:16px;height:19px;line-height:17px;"><span style="color:#a8a8a8;font-size:12px;-webkit-text-stroke:0;text-shadow:1px 1px 0 #f4f4f4;">D</span></div>
<div class="f " style="left:21px;top:537px;width:64px;height:19px;text-align:center;line-height:17px;letter-spacing:-0.2px;line-height:18px;"></div>
<div class="f " style="left:107px;top:537px;width:52px;height:19px;text-align:center;line-height:17px;padding-left:5px;padding-right:0;letter-spacing:-0.2px;line-height:18px;"></div>
<div class="f " style="left:161px;top:537px;width:22px;height:19px;text-align:center;line-height:17px;letter-spacing:-0.2px;padding-left:0;padding-right:0;line-height:18px;"></div>
<div class="f " style="left:185px;top:537px;width:22px;height:19px;text-align:center;line-height:17px;letter-spacing:-0.2px;padding-left:0;padding-right:0;line-height:18px;"></div>
<div class="f " style="left:209px;top:537px;width:28px;height:19px;text-align:center;line-height:17px;letter-spacing:-0.2px;padding-left:0;padding-right:0;line-height:18px;"></div>
<div class="f " style="left:239px;top:537px;width:27px;height:19px;text-align:center;line-height:17px;letter-spacing:-0.2px;padding-left:0;padding-right:0;line-height:18px;"></div>
<div class="f " style="left:268px;top:537px;width:22px;height:19px;text-align:center;line-height:17px;padding-left:5px;padding-right:0;letter-spacing:-0.2px;line-height:18px;"></div>
<div class="f " style="left:292px;top:537px;width:65px;height:19px;text-align:right;line-height:17px;letter-spacing:-0.2px;line-height:18px;"></div>
<div class="f " style="left:359px;top:537px;width:67px;height:19px;text-align:right;line-height:17px;letter-spacing:-0.2px;line-height:18px;"></div>
<div class="f " style="left:428px;top:537px;width:78px;height:19px;text-align:right;line-height:17px;letter-spacing:-0.2px;line-height:18px;"></div>
<div class="f " style="left:508px;top:537px;width:71px;height:19px;text-align:right;line-height:17px;letter-spacing:-0.2px;line-height:18px;"></div>
<div class="f " style="left:581px;top:537px;width:32px;height:19px;text-align:right;line-height:17px;letter-spacing:-0.2px;line-height:18px;"></div>
<div class="f " style="left:615px;top:537px;width:44px;height:19px;text-align:left;line-height:17px;letter-spacing:-0.2px;line-height:18px;"></div>
<div class="f " style="left:661px;top:537px;width:49px;height:19px;line-height:17px;"><span class="ct"></span><div class="ca" style="left:33px;width:14px;height:17px"><i style="top:6px;border-top-color:#c0c4cc"></i></div></div>
<div class="f " style="left:712px;top:537px;width:34px;height:19px;text-align:left;line-height:17px;letter-spacing:-0.2px;line-height:18px;"></div>
<div class="f " style="left:748px;top:537px;width:34px;height:19px;text-align:right;line-height:17px;letter-spacing:-0.2px;line-height:18px;"></div>
<div class="f " style="left:784px;top:537px;width:34px;height:19px;text-align:right;line-height:17px;letter-spacing:-0.2px;line-height:18px;"></div>
<div class="f " style="left:820px;top:537px;width:34px;height:19px;text-align:right;line-height:17px;letter-spacing:-0.2px;line-height:18px;"></div>
<div class="f " style="left:856px;top:537px;width:41px;height:19px;text-align:left;line-height:17px;letter-spacing:-0.2px;line-height:18px;"></div>
<div class="f " style="left:899px;top:537px;width:47px;height:19px;line-height:17px;"><span class="ct"></span><div class="ca" style="left:31px;width:14px;height:17px"><i style="top:6px;border-top-color:#c0c4cc"></i></div></div>
<div class="f " style="left:948px;top:537px;width:53px;height:19px;text-align:left;line-height:17px;letter-spacing:-0.2px;line-height:18px;"></div>
<div class="b" style="left:89px;top:537px;width:14px;height:19px;line-height:17px;border-color:#a9a9a9;border-right-color:#7b98bf;border-bottom-color:#7b98bf"><span style="color:#a0a0a0;font-weight:normal;font-size:12px">V</span></div>
<div class="b" style="left:1005px;top:538px;width:18px;height:19px;line-height:17px;"><span style="color:#a8a8a8;font-size:12px;-webkit-text-stroke:0;text-shadow:1px 1px 0 #f4f4f4;">E</span></div>
<div class="b" style="left:1026px;top:538px;width:16px;height:19px;line-height:17px;"><span style="color:#a8a8a8;font-size:12px;-webkit-text-stroke:0;text-shadow:1px 1px 0 #f4f4f4;">D</span></div>
<div style="left:11px;top:452px;width:9px;height:104px;background:#e2e6ee;border:1px solid #f4f8fc;border-radius:4px;box-shadow:0 0 0 0.5px #b4c0d0"></div>
<div style="left:12px;top:465px;width:7px;height:1px;background:#7a7a7a"></div>
<div style="left:12px;top:540px;width:7px;height:1px;background:#7a7a7a"></div>
<div style="left:12px;top:456px;width:0;height:0;border-left:3.5px solid transparent;border-right:3.5px solid transparent;border-bottom:4px solid #5a6482"></div>
<div style="left:12px;top:545px;width:0;height:0;border-left:3.5px solid transparent;border-right:3.5px solid transparent;border-top:4px solid #5a6482"></div>
<div style="left:13px;top:498px;width:3px;height:10px;border-top:1px dotted #7a8aa0;border-bottom:1px dotted #7a8aa0"></div>
<div class="l" style="left:48.0px;top:566px;letter-spacing:-0.20px;">Material</div>
<div class="f g" style="left:88px;top:566px;width:606px;height:18px;text-align:left;line-height:16px;letter-spacing:-0.55px;color:#000;line-height:16px">NOTEBOOK DELL INSPIRON 15 3000</div>
<div class="l" style="left:711.6px;top:566px;letter-spacing:-0.24px;">Pendente</div>
<div class="f g" style="left:761px;top:566px;width:92px;height:19px;text-align:left;line-height:17px;letter-spacing:-0.2px;"></div>
<div class="l" style="left:854.7px;top:566px;letter-spacing:-0.10px;">Tx Financ. A.M</div>
<div class="f g" style="left:932px;top:566px;width:68px;height:19px;text-align:right;line-height:17px;letter-spacing:-0.2px;">0</div>
<div class="l" style="left:1003.3px;top:566px;letter-spacing:-0.20px;width:24px;overflow:hidden">% am</div>
<div class="l" style="left:32.3px;top:588px;letter-spacing:-0.08px;">Sub Grupo</div>
<div class="f g" style="left:88px;top:588px;width:418px;height:18px;text-align:left;line-height:16px;letter-spacing:-0.55px;line-height:16px">INFORMATICA</div>
<div class="l" style="left:528.7px;top:588px;letter-spacing:-0.16px;">Depto</div>
<div class="f g" style="left:561px;top:588px;width:378px;height:19px;text-align:left;line-height:17px;letter-spacing:-0.55px;line-height:16px">ADMINISTRACAO</div>
<div class="f g" style="left:945px;top:589px;width:73px;height:18px;text-align:left;line-height:16px;letter-spacing:-0.2px;"></div>
<div class="ck" style="left:1020px;top:591px;width:12px;height:12px;"></div>
<div class="l" style="left:53.7px;top:609px;letter-spacing:-0.29px;">Conta</div>
<div class="f g" style="left:87px;top:609px;width:47px;height:19px;text-align:left;line-height:17px;letter-spacing:-0.2px;line-height:17px">1537527</div>
<div class="f g" style="left:136px;top:609px;width:367px;height:19px;text-align:left;line-height:17px;letter-spacing:-0.55px;line-height:17px">EQUIPAMENTOS DE INFORMÁTICA</div>
<div class="l" style="left:523.6px;top:609px;letter-spacing:0.15px;">Secao</div>
<div class="f g" style="left:561px;top:609px;width:378px;height:19px;text-align:left;line-height:17px;letter-spacing:-0.55px;line-height:17px">ADMINISTRACAO</div></body></html>
